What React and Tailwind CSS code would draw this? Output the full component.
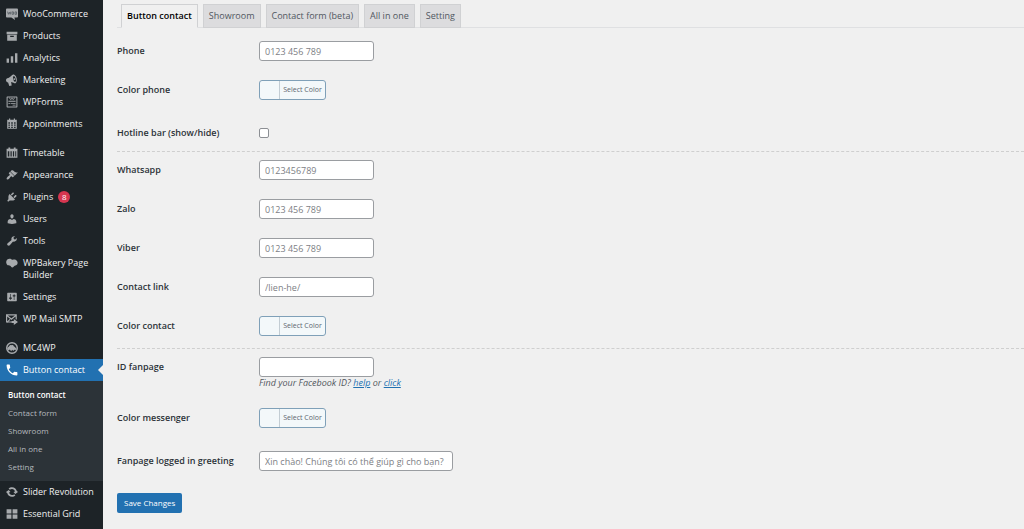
import React, { useState } from 'react';
import clsx from 'clsx';

function Icon({ viewBox = '0 0 20 20', children }) {
  return (
    <svg viewBox={viewBox} className="w-3 h-3 shrink-0 fill-current" aria-hidden="true">
      {children}
    </svg>
  );
}

const icons = {
  woo: (
    <Icon>
      <path d="M2 1h16c1.200 0 2 .8 2 2v11c0 1.200-.8 2-2 2h-4l1 4-6-4H2c-1.200 0-2-.8-2-2V3c0-1.200.8-2 2-2z" />
      <path d="M2.500 6l1.500 4.500L5.500 7 7 10.500 8 6M10 6.500h2.500v4H10zM15 6.500h2.500v4H15z" fill="none" stroke="#50575e" strokeWidth="1.200" />
    </Icon>
  ),
  products: (
    <Icon>
      <path d="M1 3h18v4H1zM2 8h16v10H2zM7 9.500v2h6v-2z" fillRule="evenodd" />
    </Icon>
  ),
  analytics: (
    <Icon>
      <path d="M1 11h4v7H1zM8 7h4v11H8zM15 2h4v16h-4z" />
    </Icon>
  ),
  marketing: (
    <Icon>
      <path d="M12 1c3 0 6 4 6 8.500S16 16 14 15.500c-2-.6-3.500-2-5.500-2l1 5.500-4 1-2-6C1.500 14 0 12.500 0 10.500S1 7 4 6.500C8 5.500 9.500 1 12 1zm1 2.500c-1.500.5-1.500 3-.8 5.500s2.300 4.500 3.500 4c1.200-.6 1.200-3 .3-5.400s-2-4.400-3-4.100z" fillRule="evenodd" />
      <circle cx="14" cy="8.500" r="1.600" />
    </Icon>
  ),
  wpforms: (
    <Icon>
      <path d="M2 1h16c.6 0 1 .4 1 1v16c0 .6-.4 1-1 1H2c-.6 0-1-.4-1-1V2c0-.6.4-1 1-1zm.7 1.700v14.600h14.600V2.700z" fillRule="evenodd" />
      <path d="M5 2l3 3 2-2 2 2 3-3v1.500l-3 3-2-2-2 2-3-3zM4 8h12v1.500H4zM4 11.500h3V13H4zM8 11.500h8V13H8zM11 14.500h5V16h-5z" />
    </Icon>
  ),
  calendar: (
    <Icon>
      <path d="M5 1h2v2h6V1h2v2h3v15H2V3h3zM4 7v2.500h2.500V7zm4.700 0v2.500h2.600V7zm4.800 0v2.500H16V7zM4 11v2h2.500v-2zm4.700 0v2h2.600v-2zm4.800 0v2H16v-2zM4 14.500v2h2.500v-2zm4.700 0v2h2.600v-2zm4.800 0v2H16v-2z" fillRule="evenodd" />
    </Icon>
  ),
  timetable: (
    <Icon>
      <path d="M4 1h3v2h6V1h3v2h3v15H1V3h3zM3 7v9h2.500V7zm4.500 0v9h2V7zm4 0v9h2V7zm4 0v9H17V7z" fillRule="evenodd" />
    </Icon>
  ),
  appearance: (
    <Icon>
      <path d="M14.480 11.060L7.410 3.990l1.500-1.500c.5-.56 2.300-.47 3.510.32 1.210.8 1.430 1.280 2.910 2.100 1.180.64 2.450 1.260 4.450.85zm-.71.71L6.700 4.700 4.930 6.470c-.39.39-.39 1.020 0 1.410l1.060 1.060c.39.39.39 1.030 0 1.420-.6.6-1.430 1.110-2.210 1.690-.35.26-.7.53-1.010.84C1.430 14.230.4 16.080 1.400 17.070c.99 1 2.840-.03 4.180-1.360.31-.31.58-.66.85-1.020.57-.78 1.080-1.610 1.690-2.210.39-.39 1.020-.39 1.410 0l1.060 1.060c.39.39 1.020.39 1.410 0z" />
    </Icon>
  ),
  plugins: (
    <Icon>
      <path d="M13.110 4.360L9.870 7.600 8 5.730l3.240-3.240c.35-.34 1.050-.2 1.560.32.52.51.66 1.210.31 1.550zm-8 1.770l.91-1.120 9.010 9.010-1.190.84c-.71.71-2.630 1.160-3.820 1.160H6.140L4.900 17.260c-.59.59-1.540.59-2.120 0-.59-.58-.59-1.530 0-2.120l1.240-1.240v-3.880c0-1.130.4-3.190 1.090-3.890zm7.260 3.970l3.240-3.240c.34-.35 1.040-.21 1.550.31.52.51.66 1.210.31 1.550l-3.240 3.250z" />
    </Icon>
  ),
  users: (
    <Icon>
      <path d="M10 9.250c-2.270 0-2.730-3.440-2.730-3.440C7 4.020 7.820 2 9.970 2c2.160 0 2.980 2.020 2.710 3.810 0 0-.41 3.440-2.680 3.440zm0 2.570L12.720 10c2.390 0 4.520 2.330 4.520 4.530v2.490s-3.650 1.130-7.240 1.130c-3.650 0-7.240-1.130-7.240-1.130v-2.490c0-2.250 1.940-4.480 4.470-4.480z" />
    </Icon>
  ),
  tools: (
    <Icon>
      <path d="M16.680 9.770c-1.340 1.340-3.300 1.670-4.950.99l-5.410 6.520c-.99.99-2.590.99-3.580 0s-.99-2.590 0-3.570l6.520-5.420c-.68-1.650-.35-3.610.99-4.950 1.280-1.280 3.120-1.620 4.720-1.060l-2.890 2.890 2.820 2.820 2.860-2.870c.53 1.580.18 3.390-1.080 4.650z" />
    </Icon>
  ),
  bakery: (
    <Icon>
      <path d="M5.500 3C8 2.500 9 4 10.500 4.500S14 3.500 16.500 5 20 9 19 11.500s-3 2.500-4.500 3-2 3-4 3-2-2.500-3.500-3S3 15 1.500 12.500 0 8 1 6s2.500-2.600 4.500-3z" />
    </Icon>
  ),
  settings: (
    <Icon>
      <path d="M18 16V4c0-.55-.45-1-1-1H3c-.55 0-1 .45-1 1v12c0 .55.45 1 1 1h14c.55 0 1-.45 1-1zM8 11h1c.55 0 1 .45 1 1s-.45 1-1 1H8v1.500c0 .28-.22.5-.5.5s-.5-.22-.5-.5V13H6c-.55 0-1-.45-1-1s.45-1 1-1h1V5.500c0-.28.22-.5.5-.5s.5.22.5.5V11zm5-2h-1c-.55 0-1-.45-1-1s.45-1 1-1h1V5.500c0-.28.22-.5.5-.5s.5.22.5.5V7h1c.55 0 1 .45 1 1s-.45 1-1 1h-1v5.500c0 .28-.22.5-.5.5s-.5-.22-.5-.5V9z" />
    </Icon>
  ),
  mail: (
    <Icon>
      <path d="M0 2h18v9h-2V6l-7 5.500L2 6v8h7v2H0zM3 4l6 4.700L15 4z" fillRule="evenodd" />
      <path d="M1 15l5-5 1.500 1L3 16zM13 10l7 5-7 5v-3.500H9v-3h4z" />
    </Icon>
  ),
  mc4wp: (
    <Icon>
      <path d="M10 0a10 10 0 100 20 10 10 0 000-20zm0 2.500a7.500 7.500 0 110 15 7.500 7.500 0 010-15z" fillRule="evenodd" />
      <path d="M2 11c.5-2 2-2.500 3.500-4.500C6.500 5 8 4.500 9.500 5.500c1.500-1 3-.3 3.500 1.500 2 .8 3.500 3 4.500 4.500-.5 1.500-2 2-3.500 1.500-1 2-2.500 2-3.500 0l-2 2.500-2-3-2.500 1.500z" />
    </Icon>
  ),
  phone: (
    <Icon viewBox="2 2 20 20">
      <path d="M6.620 10.790c1.440 2.830 3.760 5.140 6.590 6.590l2.200-2.200c.27-.27.67-.36 1.020-.24 1.120.37 2.330.57 3.570.57.55 0 1 .45 1 1V20c0 .55-.45 1-1 1-9.390 0-17-7.610-17-17 0-.55.45-1 1-1h3.500c.55 0 1 .45 1 1 0 1.250.2 2.450.57 3.570.11.35.03.74-.25 1.020l-2.200 2.200z" />
    </Icon>
  ),
  slider: (
    <Icon>
      <path d="M10 2c4 0 7 2.500 7.800 6l2.200 2-4.500 3.500L12.500 10l2.500-1c-.6-2.300-2.500-4-5-4-1.500 0-2.700.5-3.600 1.400L4.300 4.300C5.800 2.800 7.800 2 10 2z" />
      <path d="M10 18c-4 0-7-2.500-7.800-6L0 10l4.500-3.500 3 3.500L5 11c.6 2.300 2.500 4 5 4 1.500 0 2.700-.5 3.600-1.400l2.100 2.100C14.200 17.200 12.200 18 10 18z" />
    </Icon>
  ),
  grid: (
    <Icon>
      <path d="M1 2h8v7H1zM11 2h8v7h-8zM1 11h8v7H1zM11 11h8v7h-8z" />
    </Icon>
  ),
};

// each group is separated by a small gap in the admin menu
const menuGroups = [
  [
    { label: 'WooCommerce', icon: 'woo' },
    { label: 'Products', icon: 'products' },
    { label: 'Analytics', icon: 'analytics' },
    { label: 'Marketing', icon: 'marketing' },
    { label: 'WPForms', icon: 'wpforms' },
    { label: 'Appointments', icon: 'calendar' },
  ],
  [
    { label: 'Timetable', icon: 'timetable' },
    { label: 'Appearance', icon: 'appearance' },
    { label: 'Plugins', icon: 'plugins', count: 8 },
    { label: 'Users', icon: 'users' },
    { label: 'Tools', icon: 'tools' },
    { label: 'WPBakery Page Builder', icon: 'bakery' },
    { label: 'Settings', icon: 'settings' },
    { label: 'WP Mail SMTP', icon: 'mail' },
  ],
  [
    { label: 'MC4WP', icon: 'mc4wp' },
    {
      label: 'Button contact',
      icon: 'phone',
      current: true,
      children: ['Button contact', 'Contact form', 'Showroom', 'All in one', 'Setting'],
    },
    { label: 'Slider Revolution', icon: 'slider' },
    { label: 'Essential Grid', icon: 'grid' },
  ],
];

const tabs = ['Button contact', 'Showroom', 'Contact form (beta)', 'All in one', 'Setting'];

function MenuItem({ item }) {
  return (
    <li>
      <a
        href="#"
        className={clsx(
          'relative flex items-start gap-[5px] pl-[6px] pr-2 py-[5px]',
          item.current ? 'bg-[#2271b1] text-white' : 'text-[#f0f0f1] hover:text-[#72aee6]'
        )}
      >
        <span className={item.current ? 'text-white' : 'text-[#a7aaad]'}>{icons[item.icon]}</span>
        <span className="leading-3">{item.label}</span>
        {item.count && (
          <span className="w-3 h-3 rounded-full bg-[#d63650] text-white text-[8px] leading-3 text-center">
            {item.count}
          </span>
        )}
        {item.current && (
          <span className="absolute right-0 top-1/2 -translate-y-1/2 border-y-5 border-r-5 border-y-transparent border-r-[#f0f0f0]" />
        )}
      </a>
      {item.children && (
        <ul className="bg-[#2c3338] py-[5px] text-[8px]">
          {item.children.map((child, idx) => (
            <li key={child}>
              <a
                href="#"
                className={clsx(
                  'block pl-2 leading-[18px]',
                  idx === 0 ? 'font-semibold text-white' : 'text-[#b4b9be] hover:text-[#72aee6]'
                )}
              >
                {child}
              </a>
            </li>
          ))}
        </ul>
      )}
    </li>
  );
}

function Field({ id, label, children }) {
  return (
    <div className="grid grid-cols-[142px_1fr] items-start">
      <label htmlFor={id} className="font-semibold leading-5 text-[#2c3338]">{label}</label>
      <div>{children}</div>
    </div>
  );
}

function TextInput({ wide, ...props }) {
  return (
    <input
      type="text"
      className={clsx(
        'block h-5 px-[5px] bg-white border border-[#9a9da1] rounded-[3px] text-[#2c3338] placeholder:text-[#7d8085] outline-none focus:border-[#2271b1]',
        wide ? 'w-[194px]' : 'w-[115px]'
      )}
      {...props}
    />
  );
}

function ColorPicker({ id }) {
  return (
    <button
      id={id}
      type="button"
      className="flex h-5 w-[67px] mb-1 border border-[#7fa0b8] rounded-[3px] bg-[#f3f8fa] text-[#5c6670] text-[7px] leading-[18px]"
    >
      <span className="w-5 border-r border-[#c3cdd4] h-full" />
      <span className="flex-1 text-center whitespace-nowrap">Select Color</span>
    </button>
  );
}

export default function App() {
  const [activeTab, setActiveTab] = useState(0);
  const [hotline, setHotline] = useState(false);

  return (
    <div className="flex min-h-screen bg-[#f0f0f0] font-['Open_Sans','Noto_Sans',sans-serif] text-[9px] text-[#3c434a]">
      <aside className="w-[103px] shrink-0 bg-[#1d2327]">
        <nav className="flex flex-col gap-[7px] pt-[3px]">
          {menuGroups.map((group, idx) => (
            <ul key={idx}>
              {group.map((item) => (
                <MenuItem key={item.label} item={item} />
              ))}
            </ul>
          ))}
        </nav>
      </aside>

      <main className="flex-1 min-w-0 pl-[14px] pt-1">
        <div role="tablist" className="flex gap-[5px] pl-1 border-b border-[#dfe0e2]">
          {tabs.map((tab, idx) => (
            <button
              key={tab}
              type="button"
              role="tab"
              aria-selected={idx === activeTab}
              onClick={() => setActiveTab(idx)}
              className={clsx(
                'h-6 -mb-px px-[5px] border',
                idx === activeTab
                  ? 'bg-[#f0f0f0] border-[#d0d1d3] border-b-[#f0f0f0] text-black font-semibold'
                  : 'bg-[#dcdcde] border-[#d0d1d3] text-[#50575e] font-medium'
              )}
            >
              {tab}
            </button>
          ))}
        </div>

        <form onSubmit={(e) => e.preventDefault()}>
          <div className="flex flex-col gap-[19px] pt-[13px] pb-2 border-b border-dashed border-[#cfcfcf]">
            <Field id="phone" label="Phone">
              <TextInput id="phone" placeholder="0123 456 789" />
            </Field>
            <Field id="color-phone" label="Color phone">
              <ColorPicker id="color-phone" />
            </Field>
            <Field id="hotline" label="Hotline bar (show/hide)">
              <div className="flex h-5 items-center">
                <input
                  id="hotline"
                  type="checkbox"
                  checked={hotline}
                  onChange={(e) => setHotline(e.target.checked)}
                  className="appearance-none w-[10px] h-[10px] bg-white border border-[#8c8f94] rounded-[2px] checked:bg-[#2271b1]"
                />
              </div>
            </Field>
          </div>

          <div className="flex flex-col gap-[19px] py-2 border-b border-dashed border-[#cfcfcf]">
            <Field id="whatsapp" label="Whatsapp">
              <TextInput id="whatsapp" placeholder="0123456789" />
            </Field>
            <Field id="zalo" label="Zalo">
              <TextInput id="zalo" placeholder="0123 456 789" />
            </Field>
            <Field id="viber" label="Viber">
              <TextInput id="viber" placeholder="0123 456 789" />
            </Field>
            <Field id="contact-link" label="Contact link">
              <TextInput id="contact-link" placeholder="/lien-he/" />
            </Field>
            <Field id="color-contact" label="Color contact">
              <ColorPicker id="color-contact" />
            </Field>
          </div>

          <div className="flex flex-col gap-[19px] pt-2">
            <Field id="fanpage" label="ID fanpage">
              <TextInput id="fanpage" />
              <p className="italic leading-3 text-[#50575e]">
                Find your Facebook ID? <a href="#" className="text-[#2271b1] underline">help</a> or{' '}
                <a href="#" className="text-[#2271b1] underline">click</a>
              </p>
            </Field>
            <Field id="color-messenger" label="Color messenger">
              <ColorPicker id="color-messenger" />
            </Field>
            <Field id="greeting" label="Fanpage logged in greeting">
              <TextInput id="greeting" wide placeholder="Xin chào! Chúng tôi có thể giúp gì cho bạn?" />
            </Field>
          </div>

          <button
            type="submit"
            className="mt-[22px] h-5 px-[7px] rounded-[2px] bg-[#2271b1] text-white text-[8px] hover:bg-[#135e96]"
          >
            Save Changes
          </button>
        </form>
      </main>
    </div>
  );
}
